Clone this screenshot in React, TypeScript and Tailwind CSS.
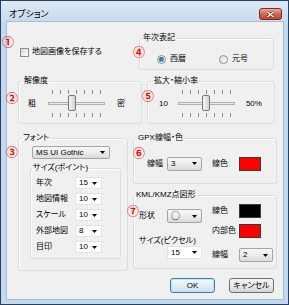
import React from "react";

// small black dropdown triangle
const Arrow = () => (
  <svg width="5" height="3" viewBox="0 0 5 3" className="shrink-0">
    <polygon points="0,0 5,0 2.5,3" fill="#000" />
  </svg>
);

// Win7 "drop down list" combo (button look)
const DropList = ({ value, className = "", valueClass = "" }: { value: string; className?: string; valueClass?: string }) => (
  <div
    className={`flex items-center justify-between rounded-[2px] border border-[#a5a5a5] bg-linear-to-b from-[#f7f7f7] via-[#ececec] to-[#dadada] pl-[3px] pr-[4px] ${className}`}
  >
    <span className={valueClass}>{value}</span>
    <Arrow />
  </div>
);

// editable combo (white)
const EditCombo = ({ value, className = "" }: { value: string; className?: string }) => (
  <div
    className={`flex items-center justify-between border border-[#e1e4e8] bg-white pl-[3px] pr-[4px] ${className}`}
  >
    <span>{value}</span>
    <Arrow />
  </div>
);

interface GroupProps {
  label: string;
  className: string;
  legendClass: string;
  children?: React.ReactNode;
}

const Group: React.FC<GroupProps> = ({ label, className, legendClass, children }) => (
  <fieldset
    className={`shrink-0 rounded-[3px] border border-[#d5dfe5] shadow-[inset_1px_1px_0_#fff] ${className}`}
  >
    <legend className={`px-[1px] leading-[10px] ${legendClass}`}>{label}</legend>
    {children}
  </fieldset>
);

const Ticks = () => (
  <div className="flex h-[4px] justify-between px-[4px]">
    {[0, 1, 2, 3, 4, 5, 6].map(i => (
      <span key={i} className="h-full w-px bg-[#8a8a8a]" />
    ))}
  </div>
);

// horizontal trackbar with ticks on both sides
const Slider = ({ value, max }: { value: number; max: number }) => {
  const width = 57;
  const left = Math.round((value / max) * (width - 8));
  return (
    <div className="relative flex h-[27px] w-[57px] shrink-0 flex-col">
      <Ticks />
      <div className="mt-[8px] h-[3px] border border-[#b0b0b0] bg-[#e7eaea]" />
      <div className="mt-[8px]">
        <Ticks />
      </div>
      <div
        className="absolute top-[5px] h-[16px] w-[8px] rounded-[2px] border border-[#777] bg-linear-to-r from-[#f6f6f6] to-[#d2d2d2]"
        style={{ left }}
      />
    </div>
  );
};

const Radio = ({ checked }: { checked?: boolean }) => (
  <span className="flex h-[9px] w-[9px] shrink-0 items-center justify-center rounded-full border border-[#8e8f8f] bg-linear-to-br from-[#dcdcdc] to-[#fafafa]">
    {checked && (
      <span className="h-[5px] w-[5px] rounded-full bg-linear-to-br from-[#1d4f7d] to-[#6aa9de]" />
    )}
  </span>
);

const Swatch = ({ className }: { className: string }) => (
  <span className={`h-[14px] w-[22px] shrink-0 border border-[#3a3a3a] ${className}`} />
);

const Mark = ({ n, className }: { n: string; className: string }) => (
  <span
    className={`absolute text-[12px] font-bold leading-none text-[#ff0000] font-['Noto_Sans_CJK_JP',sans-serif] ${className}`}
  >
    {n}
  </span>
);

const sizeRows = [
  { label: "年次", value: "15" },
  { label: "地図情報", value: "10" },
  { label: "スケール", value: "10" },
  { label: "外部地図", value: "8" },
  { label: "目印", value: "10" }
];

export default function App() {
  return (
    <div className="relative h-[305px] w-[289px] overflow-hidden border border-[#22405f] bg-[#c5d8ee] text-[8px] leading-[10px] text-black font-['Liberation_Sans','Noto_Sans_CJK_JP',sans-serif] [font-feature-settings:'palt']">
      {/* title bar */}
      <div className="flex h-[21px] justify-between bg-linear-to-b from-[#dfe9f5] to-[#c8d9ee]">
        <span className="ml-[8px] mt-[7px] text-[9px] leading-[12px]">オプション</span>
        <div className="mr-[6px] mt-[7px] flex h-[12px] w-[23px] items-center justify-center rounded-[3px] border border-[#7a2e26] bg-linear-to-b from-[#eaaa9c] via-[#d3644c] to-[#c4432b]">
          <svg width="9" height="7" viewBox="0 0 9 7">
            <path d="M1.5 1 L7.5 6 M7.5 1 L1.5 6" stroke="#5a1a14" strokeWidth="2.6" />
            <path d="M1.5 1 L7.5 6 M7.5 1 L1.5 6" stroke="#fff" strokeWidth="1.6" />
          </svg>
        </div>
      </div>

      {/* client area */}
      <div className="ml-[6px] flex h-[277px] w-[276px] flex-col bg-[#f0f0f0] ring-1 ring-[#a9bed6]">
        {/* row 1 */}
        <div className="mt-[11px] flex h-[37px]">
          <div className="w-[132px] pl-[13px] pt-[14px]">
            <div className="flex items-center gap-[3px]">
              <span className="h-[9px] w-[9px] border border-[#8e8f8f] bg-linear-to-br from-[#d8d8d8] to-[#fbfbfb]" />
              <span>地図画像を保存する</span>
            </div>
          </div>
          <Group label="年次表記" className="h-[37px] w-[135px]" legendClass="ml-[2px]">
            <div className="flex items-center pl-[17px] pt-[11px]">
              <div className="flex w-[62px] items-center gap-[4px]">
                <Radio checked />
                <span>西暦</span>
              </div>
              <div className="flex items-center gap-[4px]">
                <Radio />
                <span>元号</span>
              </div>
            </div>
          </Group>
        </div>

        {/* row 2 */}
        <div className="mt-[6px] flex">
          <Group label="解像度" className="ml-[11px] h-[48px] w-[124px]" legendClass="ml-[4px]">
            <div className="flex items-center pl-[9px] pt-[4px]">
              <span>粗</span>
              <div className="ml-[12px]">
                <Slider value={20} max={49} />
              </div>
              <span className="ml-[12px]">密</span>
            </div>
          </Group>
          <Group label="拡大・縮小率" className="ml-[5px] h-[48px] w-[128px]" legendClass="ml-[5px]">
            <div className="flex items-center pl-[11px] pt-[4px]">
              <span>10</span>
              <div className="ml-[10px]">
                <Slider value={24} max={49} />
              </div>
              <span className="ml-[11px]">50%</span>
            </div>
          </Group>
        </div>

        {/* row 3 */}
        <div className="mt-[9px] flex">
          <Group label="フォント" className="ml-[11px] h-[138px] w-[110px]" legendClass="ml-[3px]">
            <div className="flex flex-col pl-[13px] pt-[3px]">
              <DropList value="MS UI Gothic" className="h-[13px] w-[78px]" />
            </div>
            <div className="flex flex-col pl-[11px] pt-[4px]">
              <Group label="サイズ(ポイント)" className="h-[96px] w-[91px]" legendClass="ml-[1px]">
                <div className="flex flex-col gap-[4px] pl-[5px] pt-[4px]">
                  {sizeRows.map(row => (
                    <div key={row.label} className="flex h-[12px] items-center">
                      <span className="w-[39px]">{row.label}</span>
                      <EditCombo value={row.value} className="h-[12px] w-[27px]" />
                    </div>
                  ))}
                </div>
              </Group>
            </div>
          </Group>

          <div className="ml-[5px] flex flex-col">
            <Group label="GPX線幅・色" className="h-[51px] w-[144px]" legendClass="ml-[3px]">
              <div className="flex h-[28px] items-center pl-[13px] pt-[13px]">
                <span className="w-[20px]">線幅</span>
                <DropList value="3" className="h-[14px] w-[35px]" />
                <span className="ml-[10px] w-[27px]">線色</span>
                <Swatch className="bg-[#ff0000]" />
              </div>
            </Group>

            <Group label="KML/KMZ点図形" className="mt-[6px] h-[79px] w-[144px]" legendClass="ml-[1px]">
              <div className="flex pl-[5px] pt-[4px]">
                <div className="flex w-[73px] flex-col pt-[5px]">
                  <div className="flex h-[14px] items-center">
                    <span className="w-[28px]">形状</span>
                    <DropList
                      value="○"
                      className="h-[14px] w-[35px]"
                      valueClass="text-[9px] leading-[10px] font-['Noto_Sans_CJK_JP',sans-serif]"
                    />
                  </div>
                  <span className="mt-[13px]">サイズ(ピクセル)</span>
                  <div className="pl-[28px]">
                    <EditCombo value="15" className="h-[13px] w-[35px]" />
                  </div>
                </div>
                <div className="flex flex-col">
                  <div className="flex h-[14px] items-center">
                    <span className="w-[27px]">線色</span>
                    <Swatch className="bg-black" />
                  </div>
                  <div className="mt-[6px] flex h-[14px] items-center">
                    <span className="w-[27px]">内部色</span>
                    <Swatch className="bg-[#ff0000]" />
                  </div>
                  <div className="mt-[10px] flex h-[14px] items-center">
                    <span className="w-[27px]">線幅</span>
                    <DropList value="2" className="h-[14px] w-[34px]" />
                  </div>
                </div>
              </div>
            </Group>
          </div>
        </div>

        {/* buttons */}
        <div className="mt-[7px] flex justify-end gap-[14px] pr-[9px]">
          <div className="flex h-[15px] w-[45px] items-center justify-center rounded-[3px] border border-[#3c7fb1] bg-linear-to-b from-[#f4f9fc] via-[#e3eef6] to-[#cfe0ec] shadow-[inset_0_0_0_1px_#bfe4f7]">
            OK
          </div>
          <div className="flex h-[15px] w-[45px] items-center justify-center rounded-[3px] border border-[#707070] bg-linear-to-b from-[#f2f2f2] via-[#ebebeb] to-[#d4d4d4]">
            キャンセル
          </div>
        </div>
      </div>

      {/* red annotation numbers */}
      <Mark n="①" className="left-[1px] top-[35px]" />
      <Mark n="②" className="left-[5px] top-[91px]" />
      <Mark n="③" className="left-[5px] top-[145px]" />
      <Mark n="④" className="left-[132px] top-[45px]" />
      <Mark n="⑤" className="left-[141px] top-[89px]" />
      <Mark n="⑥" className="left-[132px] top-[146px]" />
      <Mark n="⑦" className="left-[126px] top-[204px]" />
    </div>
  );
}
